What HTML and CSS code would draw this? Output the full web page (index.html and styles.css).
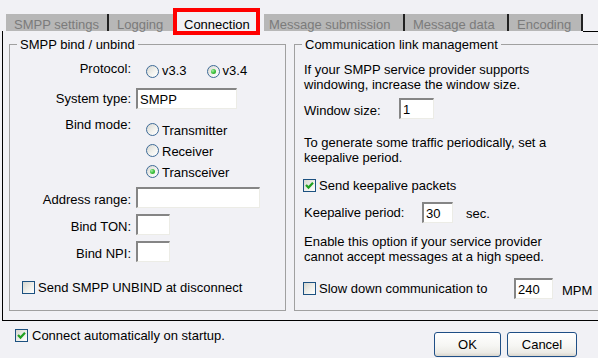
FILE: index.html
```html
<!DOCTYPE html>
<html>
<head>
<meta charset="utf-8">
<title>Connection</title>
<link rel="stylesheet" href="styles.css">
</head>
<body>
<div class="dialog">
  <div class="tabs">
    <div class="tab t1">SMPP settings</div>
    <div class="tab t2">Logging</div>
    <div class="tab active">Connection</div>
    <div class="tab t4">Message submission</div>
    <div class="tab t5">Message data</div>
    <div class="tab t6">Encoding</div>
    <div class="tab-rest"></div>
  </div>
  <div class="panel">
    <fieldset class="group left">
      <legend>SMPP bind / unbind</legend>
      <div class="frow protocol">
        <span class="flabel">Protocol:</span>
        <div class="radios inline">
          <label class="radio"><span class="rb"></span>v3.3</label>
          <label class="radio"><span class="rb on"></span>v3.4</label>
        </div>
      </div>
      <div class="frow systype">
        <span class="flabel">System type:</span>
        <input class="tb w-sys" type="text" value="SMPP">
      </div>
      <div class="frow bindmode">
        <span class="flabel">Bind mode:</span>
        <div class="radios stack">
          <label class="radio"><span class="rb"></span>Transmitter</label>
          <label class="radio"><span class="rb"></span>Receiver</label>
          <label class="radio"><span class="rb on"></span>Transceiver</label>
        </div>
      </div>
      <div class="frow addr">
        <span class="flabel low">Address range:</span>
        <input class="tb w-addr" type="text" value="">
      </div>
      <div class="frow ton">
        <span class="flabel low">Bind TON:</span>
        <input class="tb w-small" type="text" value="">
      </div>
      <div class="frow npi">
        <span class="flabel low">Bind NPI:</span>
        <input class="tb w-small" type="text" value="">
      </div>
      <label class="check unbind"><span class="cb"></span>Send SMPP UNBIND at disconnect</label>
    </fieldset>

    <fieldset class="group right">
      <legend>Communication link management</legend>
      <p class="note n1">If your SMPP service provider supports<br>windowing, increase the window size.</p>
      <div class="rrow win">
        <span class="rlabel lw-win">Window size:</span>
        <input class="tb w-win" type="text" value="1">
      </div>
      <p class="note n2">To generate some traffic periodically, set a<br>keepalive period.</p>
      <label class="check keep"><span class="cb"><svg viewBox="0 0 11 11" width="11" height="11"><path d="M2 5 L4.5 7.6 L9 2.8" fill="none" stroke="#21a121" stroke-width="2.2"/></svg></span>Send keepalive packets</label>
      <div class="rrow keepp">
        <span class="rlabel lw-kp">Keepalive period:</span>
        <input class="tb w-kp" type="text" value="30">
        <span class="unit sec">sec.</span>
      </div>
      <p class="note n3">Enable this option if your service provider<br>cannot accept messages at a high speed.</p>
      <div class="rrow slow">
        <label class="check slowcheck"><span class="cb"></span><span class="slowtext">Slow down communication to</span></label>
        <input class="tb w-slow" type="text" value="240">
        <span class="unit mpm">MPM</span>
      </div>
    </fieldset>
  </div>
  <div class="footer">
    <label class="check startup"><span class="cb"><svg viewBox="0 0 11 11" width="11" height="11"><path d="M2 5 L4.5 7.6 L9 2.8" fill="none" stroke="#21a121" stroke-width="2.2"/></svg></span>Connect automatically on startup.</label>
    <div class="buttons">
      <button class="btn ok" type="button">OK</button>
      <button class="btn cancel" type="button">Cancel</button>
    </div>
  </div>
</div>
</body>
</html>
```

FILE: styles.css
```css
html, body {
  margin: 0;
  padding: 0;
}
body {
  background: #f1f1f5;
  font-family: "Liberation Sans", Arial, sans-serif;
  font-size: 13px;
  color: #000;
  overflow: hidden;
  width: 598px;
  height: 358px;
}
.dialog {
  width: 598px;
  height: 358px;
  overflow: hidden;
}

/* Tabs */
.tabs {
  display: flex;
  margin-top: 14px;
  height: 17px;
  padding-left: 6px;
  width: 640px;
}
.tab {
  height: 17px;
  box-sizing: border-box;
  background: #b7b7b7;
  color: #7b7b7b;
  border-right: 2px solid #222;
  padding-top: 2px;
  padding-left: 8px;
  line-height: 17px;
  white-space: nowrap;
  flex-shrink: 0;
}
.t1 { width: 103px; }
.t2 { width: 66px; }
.tab.active {
  width: 89px;
  background: transparent;
  color: #000;
  border-right: 0;
  padding-left: 9px;
  position: relative;
}
.tab.active::after {
  content: "";
  position: absolute;
  left: -2px;
  top: -6px;
  width: 87px;
  height: 27px;
  box-sizing: border-box;
  border: 4px solid #ff0000;
}
.t4 { width: 141px; padding-left: 5px; }
.t5 { width: 104px; }
.t6 { width: 74px; }
.tab-rest {
  flex: 1;
  box-shadow: 0 1px 0 #000;
}

/* Panel */
.panel {
  margin-left: 2px;
  width: 640px;
  height: 289px;
  border-left: 1px solid #000;
  border-bottom: 1px solid #000;
  display: flex;
  align-items: flex-start;
}
.group {
  margin: 6px 0 0 0;
  padding: 0;
  border: 1px solid #a0a0a0;
  height: 274px;
  box-sizing: border-box;
  min-width: 0;
  flex-shrink: 0;
}
.group.left { margin-left: 6px; width: 277px; }
.group.right { margin-left: 8px; width: 320px; }
.group legend {
  margin-left: 7px;
  padding: 0 3px;
  line-height: 15px;
}

/* Left group rows */
.frow {
  display: flex;
  align-items: center;
}
.flabel {
  width: 121px;
  text-align: right;
  margin-right: 5px;
  line-height: 15px;
  flex-shrink: 0;
}
.flabel.low { padding-top: 4px; }
.protocol { margin-top: 8px; align-items: flex-start; height: 20px; }
.protocol .flabel { margin-top: 1px; }
.systype { margin-top: 8px; }
.bindmode { margin-top: 8px; align-items: flex-start; }
.addr { margin-top: 4px; }
.ton { margin-top: 6px; }
.npi { margin-top: 6px; }

.radios.inline {
  display: flex;
  margin-left: 10px;
  margin-top: 1px;
}
.radios.inline .radio {
  height: 20px;
  line-height: 20px;
  margin-right: 20px;
}
.radios.stack {
  display: flex;
  flex-direction: column;
  margin-left: 10px;
  margin-top: 3px;
}
.radios.stack .radio {
  height: 21px;
  line-height: 21px;
}
.radios.stack .rb { margin-bottom: 2px; }
.radio {
  display: flex;
  align-items: center;
  white-space: nowrap;
}
.rb {
  width: 13px;
  height: 13px;
  box-sizing: border-box;
  border: 1px solid #3d6a97;
  border-radius: 50%;
  background: linear-gradient(135deg, #d8d8d2 0%, #f4f4f0 60%, #ffffff 100%);
  margin-right: 3px;
  flex-shrink: 0;
  display: flex;
  align-items: center;
  justify-content: center;
}
.rb.on::after {
  content: "";
  width: 5px;
  height: 5px;
  border-radius: 50%;
  background: radial-gradient(circle at 35% 35%, #a6f0a6 0%, #3cc03c 50%, #1f9a1f 100%);
}

/* Text boxes */
.tb {
  box-sizing: border-box;
  height: 21px;
  margin: 0;
  border-style: solid;
  border-width: 2px 1px 1px 2px;
  border-color: #858585 #ecece6 #ecece6 #858585;
  background: #ffffff;
  padding: 0 2px;
  font-family: "Liberation Sans", Arial, sans-serif;
  font-size: 13px;
  color: #000;
  outline: none;
  flex-shrink: 0;
}
.w-sys { width: 101px; }
.w-addr { width: 124px; }
.w-small { width: 34px; }
.w-win { width: 35px; }
.w-kp { width: 31px; }
.w-slow { width: 39px; }

/* Checkboxes */
.check {
  display: flex;
  align-items: center;
  height: 21px;
  line-height: 21px;
  white-space: nowrap;
}
.cb {
  width: 13px;
  height: 13px;
  box-sizing: border-box;
  border: 1px solid #1c5180;
  background: linear-gradient(135deg, #d6d6cf 0%, #efefea 55%, #ffffff 100%);
  margin-right: 3px;
  flex-shrink: 0;
  display: flex;
  align-items: center;
  justify-content: center;
}
.cb svg { display: block; }
.unbind { margin-top: 15px; margin-left: 12px; }

/* Right group */
.note {
  margin: 0 0 0 9px;
  line-height: 15px;
  white-space: nowrap;
}
.n1 { margin-top: 10px; }
.n2 { margin-top: 16px; }
.n3 { margin-top: 11px; }
.rrow {
  display: flex;
  align-items: center;
  margin-left: 9px;
}
.rlabel {
  line-height: 15px;
  flex-shrink: 0;
}
.lw-win { width: 95px; padding-top: 3px; }
.lw-kp { width: 118px; }
.win { margin-top: 6px; }
.keep { margin-top: 10px; margin-left: 8px; }
.keepp { margin-top: 6px; }
.unit { line-height: 15px; padding-top: 1px; }
.sec { margin-left: 13px; }
.slow { margin-top: 14px; margin-left: 8px; }
.slowtext { width: 195px; display: inline-block; }
.mpm { margin-left: 9px; padding-top: 3px; }

/* Footer */
.footer {
  display: flex;
  align-items: flex-start;
  width: 598px;
}
.startup { margin: 4px 0 0 15px; }
.startup .cb { margin-right: 4px; }
.buttons {
  display: flex;
  margin: 11px 21px 0 auto;
}
.btn {
  height: 25px;
  box-sizing: border-box;
  border: 1px solid #1f4f86;
  border-radius: 3px;
  background: linear-gradient(#ffffff 0%, #f6f6f3 55%, #ecebe6 85%, #d9d6cd 100%);
  font-family: "Liberation Sans", Arial, sans-serif;
  font-size: 13px;
  color: #000;
  padding: 0;
  margin: 0;
}
.ok { width: 67px; margin-right: 6px; }
.cancel { width: 70px; }
```
